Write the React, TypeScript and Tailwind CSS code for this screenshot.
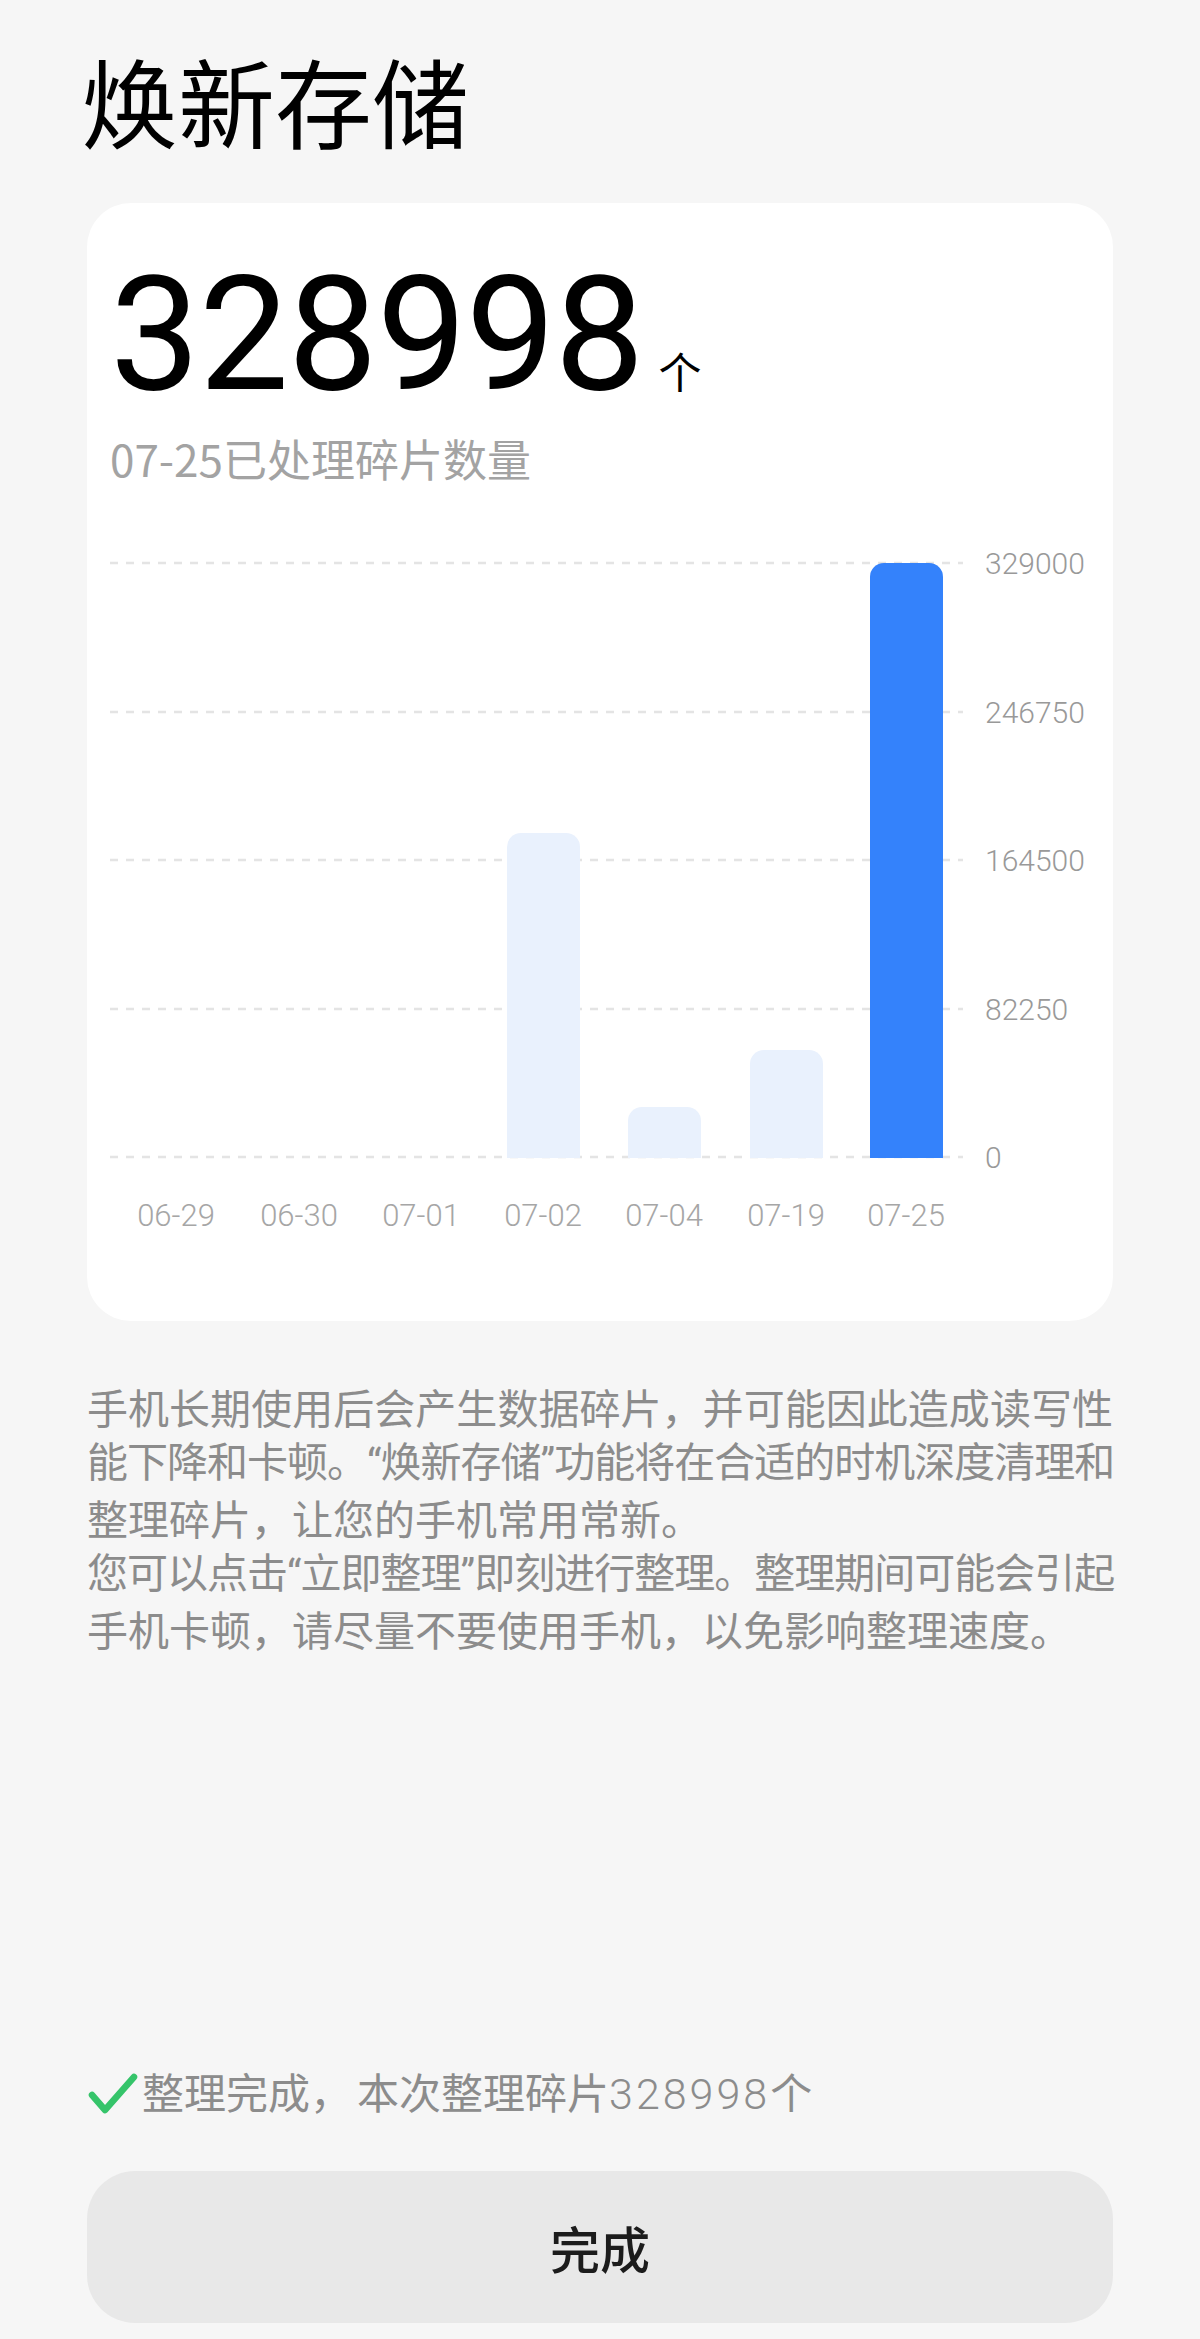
import React from "react";

const CJK = "font-['Noto_Sans_CJK_SC','Noto_Sans',sans-serif]";

function barPath(x: number, top: number, w: number, bottom: number, r: number) {
  return `M${x},${bottom} V${top + r} A${r},${r} 0 0 1 ${x + r},${top} H${x + w - r} A${r},${r} 0 0 1 ${x + w},${top + r} V${bottom} Z`;
}

function Chart() {
  const grid = [
    { y: 23, label: "329000" },
    { y: 172, label: "246750" },
    { y: 320, label: "164500" },
    { y: 469, label: "82250" },
    { y: 617, label: "0" },
  ];
  const bars = [
    { x: 420, top: 293, color: "#e9f1fd" },
    { x: 541, top: 567, color: "#e9f1fd" },
    { x: 663, top: 510, color: "#e9f1fd" },
    { x: 783, top: 23, color: "#3482fb" },
  ];
  const dates = [
    { x: 89, t: "06-29" },
    { x: 212, t: "06-30" },
    { x: 334, t: "07-01" },
    { x: 456, t: "07-02" },
    { x: 577, t: "07-04" },
    { x: 699, t: "07-19" },
    { x: 819, t: "07-25" },
  ];
  return (
    <svg width="1025" height="700" viewBox="0 0 1025 700" className="block">
      {grid.map((g) => (
        <line
          key={g.label}
          x1={23}
          x2={876}
          y1={g.y}
          y2={g.y}
          stroke="#e4e4e4"
          strokeWidth={2.5}
          strokeDasharray="8 8"
        />
      ))}
      {bars.map((b) => (
        <path key={b.x} d={barPath(b.x, b.top, 73, 618, 14)} fill={b.color} />
      ))}
      {grid.map((g) => (
        <text
          key={"l" + g.label}
          x={898}
          y={g.y + 10.5}
          fontFamily="Roboto, sans-serif"
          fontWeight={300}
          fontSize={30}
          fill="#999999"
        >
          {g.label}
        </text>
      ))}
      {dates.map((d) => (
        <text
          key={d.t}
          x={d.x}
          y={686}
          textAnchor="middle"
          fontFamily="Roboto, sans-serif"
          fontWeight={300}
          fontSize={31}
          fill="#a6a6a6"
        >
          {d.t}
        </text>
      ))}
    </svg>
  );
}

const Q = ({ children }: { children: React.ReactNode }) => (
  <span className="font-['Roboto',sans-serif]">{children}</span>
);

export default function App() {
  return (
    <div className={`min-h-screen w-[1200px] bg-[#f6f6f6] ${CJK} flex flex-col px-[87px]`}>
      <h1 className="pt-[50px] -ml-[6px] text-[97px] leading-none font-normal text-black">焕新存储</h1>

      <div className="mt-[56px] bg-white rounded-[44px] pt-[52px] pb-[81px]">
        <div className="px-[23px]">
          <div className="flex items-baseline">
            <span className="font-['Roboto',sans-serif] text-[160px] leading-none tracking-[-1px] text-black font-normal">
              328998
            </span>
            <span className="ml-[15px] text-[43px] leading-none text-black font-normal">个</span>
          </div>
          <div className="mt-[21px] text-[44px] leading-none text-[#a3a3a3]">07-25已处理碎片数量</div>
        </div>
        <div className="mt-[60px]">
          <Chart />
        </div>
      </div>

      <div className="mt-[59px] text-[41px] leading-[53.4px] text-[#8c8c8c]">
        <div className="whitespace-nowrap text-justify [text-align-last:justify]">
          手机长期使用后会产生数据碎片，并可能因此造成读写性
        </div>
        <div className="whitespace-nowrap text-justify [text-align-last:justify] tracking-[-1px]">
          能下降和卡顿。<Q>“</Q>焕新存储<Q>”</Q>功能将在合适的时机深度清理和
        </div>
        <div className="whitespace-nowrap">整理碎片，让您的手机常用常新。</div>
        <div className="whitespace-nowrap text-justify [text-align-last:justify] tracking-[-1px]">
          您可以点击<Q>“</Q>立即整理<Q>”</Q>即刻进行整理。整理期间可能会引起
        </div>
        <div className="whitespace-nowrap">手机卡顿，请尽量不要使用手机，以免影响整理速度。</div>
      </div>

      <div className="flex-1" />

      <div className="flex items-center h-[53px]">
        <svg width="52" height="44" viewBox="0 0 52 44" className="shrink-0 mt-[2px]">
          <polyline
            points="5,23 18,38 47,5"
            fill="none"
            stroke="#35c46a"
            strokeWidth="6.5"
            strokeLinecap="round"
            strokeLinejoin="round"
          />
        </svg>
        <span className="ml-[3px] text-[42px] leading-none text-[#8c8c8c] whitespace-nowrap">
          整理完成，<span className="ml-[5px]">本次整理碎片</span>
          <span className="font-['Roboto',sans-serif] font-light text-[43px] tracking-[3px]">328998</span>
          个
        </span>
      </div>

      <button className="mt-[52px] mb-[16px] h-[152px] w-full rounded-[48px] bg-[#e8e8e8] flex items-center justify-center">
        <span className="text-[50px] leading-none font-medium text-[#1c1c1c]">完成</span>
      </button>
    </div>
  );
}
